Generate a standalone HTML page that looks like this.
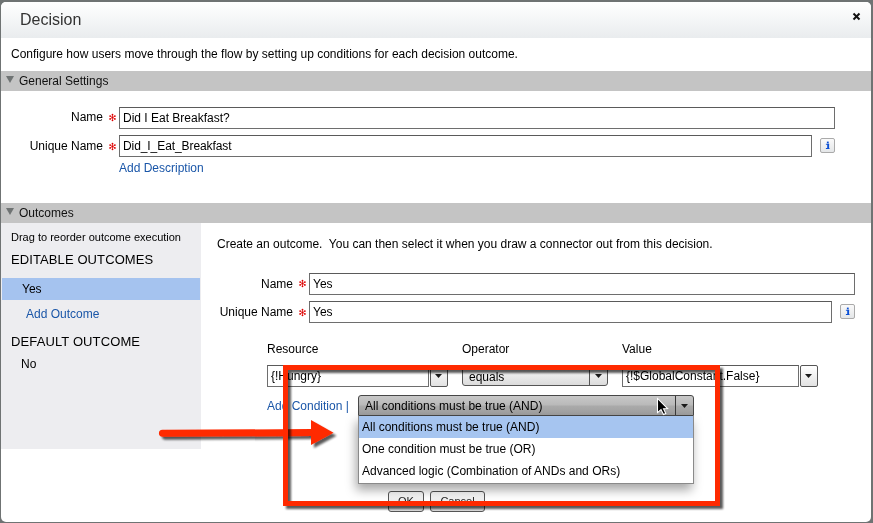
<!DOCTYPE html>
<html><head><meta charset="utf-8">
<style>
*{margin:0;padding:0;box-sizing:border-box}
html,body{will-change:transform;width:873px;height:523px;overflow:hidden;background:#6f7373;font-family:"Liberation Sans",sans-serif;color:#000}
.a{position:absolute;white-space:nowrap}
.dlg{position:absolute;left:1px;top:2px;width:870px;height:520px;background:#fff;border-radius:5px}
.hdr{position:absolute;left:1px;top:2px;width:870px;height:36px;border-radius:5px 5px 0 0;background:linear-gradient(#fff,#e9ecee)}
.bar{position:absolute;left:1px;width:870px;height:20px;background:#c4c4c4;font-size:12px;color:#111}
.tri{position:absolute;left:5px;top:5px;width:0;height:0;border-left:4px solid transparent;border-right:4px solid transparent;border-top:7px solid #6f7373}
.inp{position:absolute;border:1px solid #6e6e6e;border-top-color:#5a5a5a;background:#fff;font-size:12px;padding-left:3px;padding-top:1px;line-height:19px;color:#000}
.lbl{position:absolute;font-size:12px;color:#000;text-align:right;white-space:nowrap}
.lnk{color:#1a56a8}
.info{position:absolute;width:15px;height:15px;border:1px solid #aaa;border-radius:2px;background:linear-gradient(#fafafa,#e4e6e8)}
.side{position:absolute;left:1px;top:223px;width:200px;height:226px;background:#ededf0}
.ddb{position:absolute;width:18px;height:22px;border:1px solid #555;border-radius:2px;background:linear-gradient(#fff,#e2e2e2)}
.ddb:after{content:"";position:absolute;left:4px;top:8px;width:7px;height:4px;background:#1a1a1a;clip-path:polygon(0 0,100% 0,50% 100%)}
.sel{position:absolute;border:1px solid #555;border-radius:3px;background:linear-gradient(#fafafa,#dcdcdc);font-size:12px;line-height:18px;padding-left:6px;padding-top:2px;color:#000}
.sel:before{content:"";position:absolute;right:17px;top:0;bottom:0;width:1px;background:#555}
.sel:after{content:"";position:absolute;right:5px;top:8px;width:7px;height:4px;background:#1a1a1a;clip-path:polygon(0 0,100% 0,50% 100%)}
.sel2{position:absolute;border:1px solid #474747;border-radius:3px 3px 0 0;background:linear-gradient(#c8c8c8 0%,#b9b9b9 48%,#aaaaaa 52%,#9d9d9d 100%);box-shadow:0 1px 0 #3a3a3a;font-size:12px;line-height:19px;padding-left:6px;padding-top:1px;color:#000}
.sel2:before{content:"";position:absolute;right:17px;top:0;bottom:0;width:1px;background:#3a3a3a}
.sel2:after{content:"";position:absolute;right:5px;top:8px;width:7px;height:4px;background:#1a1a1a;clip-path:polygon(0 0,100% 0,50% 100%)}
.list{position:absolute;background:#fff;border:1px solid #8a8a8a;border-top:none;box-shadow:-2px 6px 10px rgba(0,0,0,.35)}
.opt{height:22px;line-height:22px;font-size:12px;padding-left:3px;color:#000;white-space:nowrap}
.btn{position:absolute;border:1px solid #555;border-radius:3px;background:linear-gradient(#fbfbfb,#dedede);font-size:11px;text-align:center;line-height:18px;color:#222}
.ast{position:absolute;width:11px;height:11px}
</style></head><body>
<svg width="0" height="0" style="position:absolute"><defs>
<g id="star"><g stroke="#e63030" stroke-width="0.8"><line x1="5.5" y1="2.6" x2="5.5" y2="8.4"/><line x1="3" y1="4.05" x2="8" y2="6.95"/><line x1="3" y1="6.95" x2="8" y2="4.05"/></g><g fill="#dd0000"><circle cx="5.5" cy="2.7" r="0.9"/><circle cx="5.5" cy="8.3" r="0.9"/><circle cx="3.1" cy="4.1" r="0.9"/><circle cx="7.9" cy="6.9" r="0.9"/><circle cx="3.1" cy="6.9" r="0.9"/><circle cx="7.9" cy="4.1" r="0.9"/><circle cx="5.5" cy="5.5" r="0.9"/></g></g>
<filter id="sh" x="-10%" y="-10%" width="130%" height="130%"><feGaussianBlur in="SourceAlpha" stdDeviation="1"/><feOffset dx="3" dy="3"/><feComponentTransfer><feFuncA type="linear" slope="0.65"/></feComponentTransfer><feMerge><feMergeNode/><feMergeNode in="SourceGraphic"/></feMerge></filter>
</defs></svg>
<div class="dlg"></div>
<div class="hdr"></div>
<div class="a" style="left:20px;top:11px;font-size:16px;color:#333">Decision</div>
<svg class="a" style="left:850px;top:10px" width="14" height="14"><g stroke="#111" stroke-width="2"><line x1="3.5" y1="3.5" x2="9.5" y2="9.5"/><line x1="9.5" y1="3.5" x2="3.5" y2="9.5"/></g></svg>
<div class="a" style="left:11px;top:47px;font-size:12px;color:#000">Configure how users move through the flow by setting up conditions for each decision outcome.</div>
<div class="bar" style="top:71px"><div class="tri"></div><span class="a" style="left:18px;top:3px">General Settings</span></div>

<div class="lbl" style="right:770px;top:110px">Name</div>
<svg class="ast" style="left:107px;top:112px"><use href="#star"/></svg>
<div class="inp" style="left:119px;top:107px;width:716px;height:22px">Did I Eat Breakfast?</div>
<div class="lbl" style="right:770px;top:139px">Unique Name</div>
<svg class="ast" style="left:107px;top:141px"><use href="#star"/></svg>
<div class="inp" style="left:119px;top:135px;width:693px;height:22px;letter-spacing:-0.08px">Did_I_Eat_Breakfast</div>
<div class="info" style="left:820px;top:138px"><svg width="13" height="13" style="position:absolute;left:0;top:0"><g fill="#0b4fd4"><rect x="5.9" y="2.6" width="1.8" height="1.6"/><rect x="4.9" y="4.8" width="3.2" height="0.9"/><rect x="6.2" y="4.8" width="1.9" height="4.4"/><rect x="4.9" y="9" width="3.6" height="1"/></g></svg></div>
<div class="a lnk" style="left:119px;top:161px;font-size:12px">Add Description</div>

<div class="bar" style="top:203px"><div class="tri"></div><span class="a" style="left:18px;top:3px">Outcomes</span></div>
<div class="side"></div>
<div class="a" style="left:11px;top:231px;font-size:11px;color:#000">Drag to reorder outcome execution</div>
<div class="a" style="left:11px;top:252px;font-size:13px;letter-spacing:0.1px;color:#000">EDITABLE OUTCOMES</div>
<div class="a" style="left:2px;top:278px;width:198px;height:22px;background:#a5c3ef"></div>
<div class="a" style="left:22px;top:282px;font-size:12px;color:#000">Yes</div>
<div class="a lnk" style="left:26px;top:307px;font-size:12px">Add Outcome</div>
<div class="a" style="left:11px;top:334px;font-size:13px;letter-spacing:0.12px;color:#000">DEFAULT OUTCOME</div>
<div class="a" style="left:21px;top:357px;font-size:12px;color:#000">No</div>

<div class="a" style="left:217px;top:237px;font-size:12px;color:#000">Create an outcome.&nbsp; You can then select it when you draw a connector out from this decision.</div>
<div class="lbl" style="right:580px;top:277px">Name</div>
<svg class="ast" style="left:297px;top:278px"><use href="#star"/></svg>
<div class="inp" style="left:309px;top:273px;width:546px;height:22px">Yes</div>
<div class="lbl" style="right:580px;top:305px">Unique Name</div>
<svg class="ast" style="left:297px;top:307px"><use href="#star"/></svg>
<div class="inp" style="left:309px;top:301px;width:523px;height:22px">Yes</div>
<div class="info" style="left:840px;top:304px"><svg width="13" height="13" style="position:absolute;left:0;top:0"><g fill="#0b4fd4"><rect x="5.9" y="2.6" width="1.8" height="1.6"/><rect x="4.9" y="4.8" width="3.2" height="0.9"/><rect x="6.2" y="4.8" width="1.9" height="4.4"/><rect x="4.9" y="9" width="3.6" height="1"/></g></svg></div>

<div class="a" style="left:267px;top:342px;font-size:12px;color:#000">Resource</div>
<div class="a" style="left:462px;top:342px;font-size:12px;color:#000">Operator</div>
<div class="a" style="left:622px;top:342px;font-size:12px;color:#000">Value</div>

<div class="inp" style="left:267px;top:365px;width:162px;height:22px">{!Hungry}</div>
<div class="ddb" style="left:430px;top:365px"></div>
<div class="sel" style="left:462px;top:365px;width:146px;height:21px">equals</div>
<div class="inp" style="left:622px;top:365px;width:177px;height:22px">{!$GlobalConstant.False}</div>
<div class="ddb" style="left:800px;top:365px"></div>

<div class="a lnk" style="left:267px;top:399px;font-size:12px">Add Condition |</div>

<div class="btn" style="left:388px;top:491px;width:36px;height:21px">OK</div>
<div class="btn" style="left:430px;top:491px;width:55px;height:21px">Cancel</div>
<div class="sel2" style="left:358px;top:395px;width:336px;height:21px">All conditions must be true (AND)</div>
<div class="list" style="left:358px;top:416px;width:336px;height:68px">
  <div class="opt" style="background:#a6c5f0">All conditions must be true (AND)</div>
  <div class="opt">One condition must be true (OR)</div>
  <div class="opt">Advanced logic (Combination of ANDs and ORs)</div>
</div>
<svg class="a" style="left:0;top:0;overflow:visible" width="873" height="523">
  <g filter="url(#sh)">
    <path d="M162.4 433.3 L312 432.6" stroke="#ff2a00" stroke-width="7" stroke-linecap="round" fill="none"/>
    <path d="M311 420 L333.5 432.7 L311 445 Z" fill="#ff2a00"/>
  </g>
  <g filter="url(#sh)">
    <rect x="285.5" y="367.5" width="432" height="136" fill="none" stroke="#ff2a00" stroke-width="5"/>
  </g>
</svg>
<svg class="a" style="left:656px;top:397px" width="14" height="20"><path d="M1.5 1.5 L1.5 15.6 L5 12.5 L7.5 17.6 L9.8 16.6 L7.5 11.8 L11.6 11.6 Z" fill="#000" stroke="#fff" stroke-width="1.05" stroke-linejoin="miter"/></svg>
</body></html>
